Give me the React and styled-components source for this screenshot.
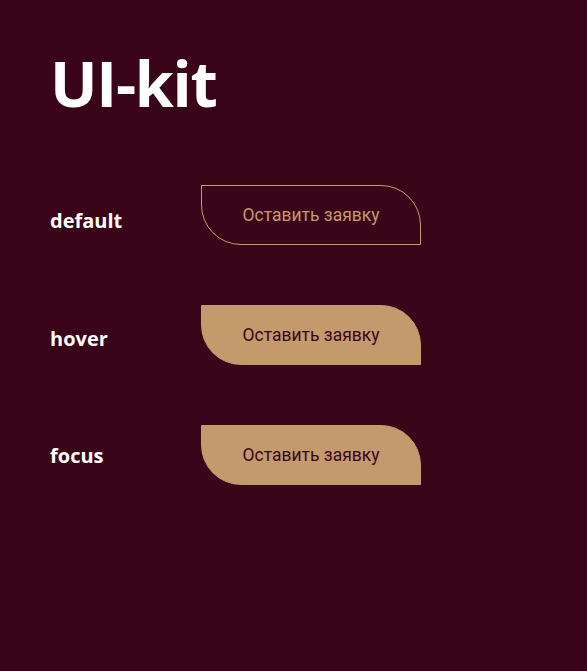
import React from "react";
import styled, { createGlobalStyle } from "styled-components";

const GlobalStyle = createGlobalStyle`
	html, body {
		margin: 0;
		padding: 0;
		background: #3a0419;
	}
	* {
		box-sizing: border-box;
	}
`;

const Page = styled.main`
	width: 587px;
	height: 671px;
	background: #3a0419;
	padding: 40px 0 0 50px;
	font-family: "Open Sans", "DejaVu Sans", sans-serif;
`;

const Title = styled.h1`
	margin: 0 0 59px;
	font-size: 63px;
	line-height: 86px;
	letter-spacing: -1.3px;
	font-weight: 700;
	color: #fff;
`;

const States = styled.div`
	display: flex;
	flex-direction: column;
	gap: 60px;
`;

const Row = styled.div`
	display: flex;
	align-items: center;
`;

const Label = styled.span`
	width: 151px;
	padding-top: ${p => p.$shift}px;
	font-size: 20px;
	font-weight: 700;
	color: #fff;
`;

const Button = styled.button`
	width: 220px;
	height: 60px;
	border: 1px solid #c49a6c;
	border-radius: 0 40px 0 40px;
	background: ${p => (p.$filled ? "#c49a6c" : "transparent")};
	color: ${p => (p.$filled ? "#3a0419" : "#c49a6c")};
	font-family: Roboto, "Liberation Sans", sans-serif;
	font-size: 17.5px;
	cursor: pointer;
	padding: 0;
`;

const states = [
	{ name: "default", filled: false, shift: 10 },
	{ name: "hover", filled: true, shift: 6 },
	{ name: "focus", filled: true, shift: 0 },
];

export default function App() {
	return (
		<>
			<GlobalStyle />
			<Page>
				<Title>UI-kit</Title>
				<States>
					{states.map(item => (
						<Row key={item.name}>
							<Label $shift={item.shift}>{item.name}</Label>
							<Button $filled={item.filled}>Оставить заявку</Button>
						</Row>
					))}
				</States>
			</Page>
		</>
	);
}
